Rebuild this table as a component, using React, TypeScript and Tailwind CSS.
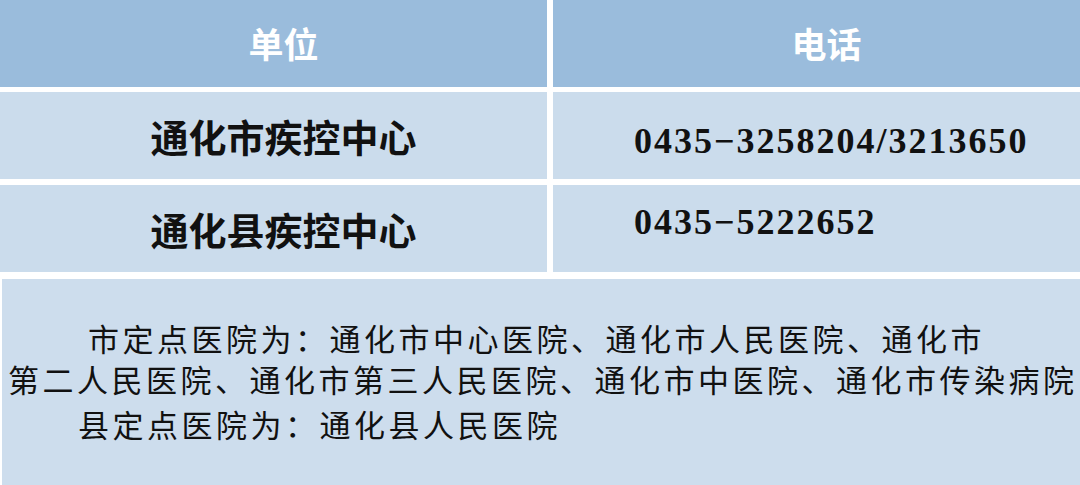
import React from 'react';

const cjk = '"Noto Sans CJK SC", "Noto Sans", sans-serif';

const rows = [
  { name: '通化市疾控中心', phone: '0435−3258204/3213650', phoneShift: 'pt-[11px]' },
  { name: '通化县疾控中心', phone: '0435−5222652', phoneShift: 'pb-[13px]' },
];

export default function App() {
  return (
    <div className="w-[1080px] h-[485px] bg-white overflow-hidden flex flex-col">
      <div className="grid grid-cols-[547px_527px] gap-x-[6px]">
        <div
          className="h-[87px] bg-[#9abcdc] flex items-center justify-center pl-[20px] text-white text-[35px] font-bold"
          style={{ fontFamily: cjk }}
        >
          单位
        </div>
        <div
          className="h-[87px] bg-[#9abcdc] flex items-center justify-center pl-[20px] text-white text-[35px] font-bold"
          style={{ fontFamily: cjk }}
        >
          电话
        </div>
      </div>

      {rows.map((row, i) => (
        <div
          key={row.name}
          className={`grid grid-cols-[547px_527px] gap-x-[6px] h-[87px] ${i === 0 ? 'mt-[5px]' : 'mt-[6px]'}`}
        >
          <div
            className="bg-[#cbdcec] flex items-center justify-center pl-[20px] text-[#111] text-[38px] font-bold"
            style={{ fontFamily: cjk }}
          >
            {row.name}
          </div>
          <div
            className={`bg-[#cbdcec] flex items-center pl-[81px] text-[#111] text-[36px] font-bold tracking-[2px] ${row.phoneShift}`}
            style={{ fontFamily: '"Liberation Serif", serif' }}
          >
            {row.phone}
          </div>
        </div>
      ))}

      <div
        className="mt-[7px] ml-[2px] flex-1 bg-[#cddded] pt-[38px] text-[#111] text-[31px] tracking-[3.5px] whitespace-nowrap"
        style={{ fontFamily: cjk }}
      >
        <div className="leading-[41px] pl-[86px]">市定点医院为：通化市中心医院、通化市人民医院、通化市</div>
        <div className="leading-[41px] pl-[6px]">第二人民医院、通化市第三人民医院、通化市中医院、通化市传染病院</div>
        <div className="leading-[41px] pl-[76px] mt-[4px]">县定点医院为：通化县人民医院</div>
      </div>
    </div>
  );
}
